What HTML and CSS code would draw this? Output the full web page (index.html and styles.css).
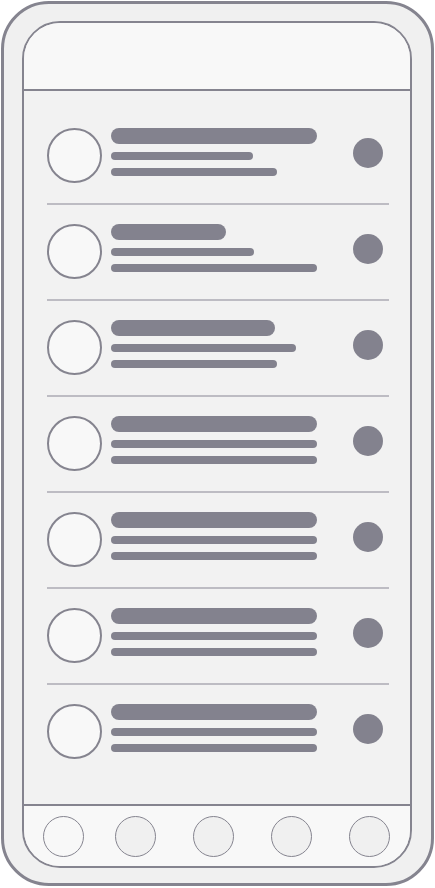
FILE: index.html
```html
<!DOCTYPE html>
<html>
<head>
<meta charset="utf-8">
<link rel="stylesheet" href="styles.css">
</head>
<body>
<div class="frame">
  <div class="screen">
    <div class="header"></div>
    <div class="list">
      <div class="row">
        <div class="avatar"></div>
        <div class="text">
          <div class="title" style="width:206px"></div>
          <div class="line" style="width:142px"></div>
          <div class="line" style="width:166px"></div>
        </div>
        <div class="dot"></div>
      </div>
      <div class="row">
        <div class="avatar"></div>
        <div class="text">
          <div class="title" style="width:115px"></div>
          <div class="line" style="width:143px"></div>
          <div class="line" style="width:206px"></div>
        </div>
        <div class="dot"></div>
      </div>
      <div class="row">
        <div class="avatar"></div>
        <div class="text">
          <div class="title" style="width:164px"></div>
          <div class="line" style="width:185px"></div>
          <div class="line" style="width:166px"></div>
        </div>
        <div class="dot"></div>
      </div>
      <div class="row">
        <div class="avatar"></div>
        <div class="text">
          <div class="title" style="width:206px"></div>
          <div class="line" style="width:206px"></div>
          <div class="line" style="width:206px"></div>
        </div>
        <div class="dot"></div>
      </div>
      <div class="row">
        <div class="avatar"></div>
        <div class="text">
          <div class="title" style="width:206px"></div>
          <div class="line" style="width:206px"></div>
          <div class="line" style="width:206px"></div>
        </div>
        <div class="dot"></div>
      </div>
      <div class="row">
        <div class="avatar"></div>
        <div class="text">
          <div class="title" style="width:206px"></div>
          <div class="line" style="width:206px"></div>
          <div class="line" style="width:206px"></div>
        </div>
        <div class="dot"></div>
      </div>
      <div class="row last">
        <div class="avatar"></div>
        <div class="text">
          <div class="title" style="width:206px"></div>
          <div class="line" style="width:206px"></div>
          <div class="line" style="width:206px"></div>
        </div>
        <div class="dot"></div>
      </div>
    </div>
    <div class="tabbar">
      <div class="tab active"></div>
      <div class="tab"></div>
      <div class="tab"></div>
      <div class="tab"></div>
      <div class="tab"></div>
    </div>
  </div>
</div>
</body>
</html>
```

FILE: styles.css
```css
html, body {
  margin: 0;
  padding: 0;
  background: #ffffff;
}
.frame {
  box-sizing: border-box;
  margin: 1px 0 0 1px;
  width: 433px;
  height: 885px;
  border: 3px solid #85848f;
  border-radius: 48px;
  background: #f0f0f0;
  padding: 17px 0 0 18px;
}
.screen {
  box-sizing: border-box;
  width: 390px;
  height: 847px;
  border: 2px solid #85848f;
  border-radius: 38px;
  overflow: hidden;
  display: flex;
  flex-direction: column;
  background: #f2f2f2;
}
.header {
  height: 66px;
  flex: none;
  background: #f8f8f8;
  border-bottom: 2px solid #85848f;
}
.list {
  flex: 1;
  padding: 18px 21px 0 23px;
  background: #f2f2f2;
}
.row {
  box-sizing: border-box;
  height: 96px;
  padding-top: 19px;
  display: flex;
  align-items: flex-start;
  border-bottom: 2px solid #bdbcc3;
}
.row.last {
  border-bottom: none;
}
.avatar {
  box-sizing: border-box;
  width: 55px;
  height: 55px;
  flex: none;
  border-radius: 50%;
  border: 2px solid #85848f;
  background: #f8f8f8;
}
.text {
  margin-left: 9px;
  width: 206px;
  display: flex;
  flex-direction: column;
}
.title {
  height: 16px;
  border-radius: 8px;
  background: #83828e;
  margin-bottom: 8px;
}
.line {
  height: 8px;
  border-radius: 4px;
  background: #83828e;
  margin-bottom: 8px;
}
.dot {
  width: 30px;
  height: 30px;
  flex: none;
  border-radius: 50%;
  background: #83828e;
  margin: 10px 6px 0 auto;
}
.tabbar {
  height: 62px;
  flex: none;
  box-sizing: border-box;
  background: #f8f8f8;
  border-top: 2px solid #85848f;
  display: flex;
  align-items: center;
  padding-left: 19px;
  gap: 37px;
}
.tab {
  box-sizing: border-box;
  width: 41px;
  height: 41px;
  border-radius: 50%;
  border: 1.5px solid #85848f;
  background: #f0f0f0;
}
.tab.active {
  background: #f8f8f8;
  margin-right: -6px;
}
```
